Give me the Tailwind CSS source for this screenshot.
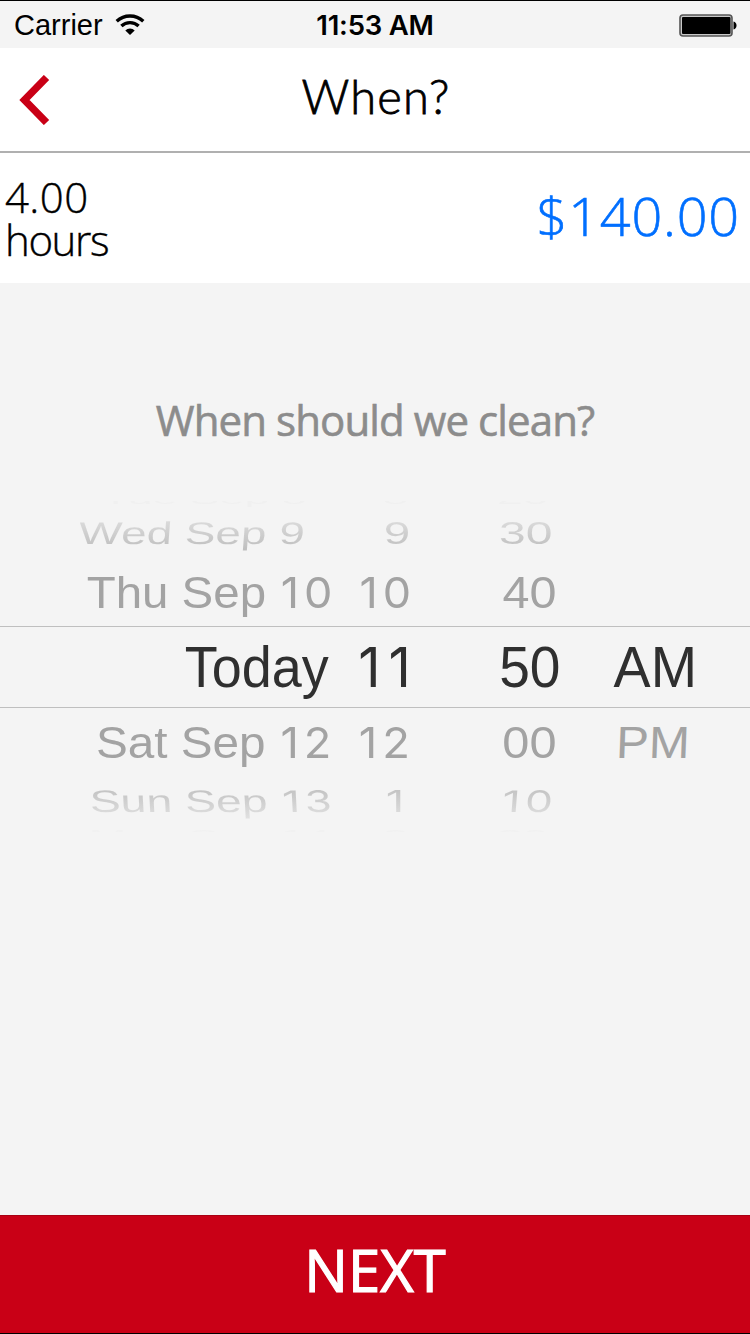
<!DOCTYPE html>
<html lang="en">
<head>
<meta charset="utf-8">
<title>When?</title>
<script src="https://cdn.jsdelivr.net/npm/@tailwindcss/browser@4"></script>
</head>
<body class="bg-[#f4f4f4]">
<div class="flex flex-col w-[750px] h-[1334px] overflow-hidden border-y border-black bg-[#f4f4f4] font-['Liberation_Sans',sans-serif] text-black">

  <!-- Status bar -->
  <div class="grid grid-cols-3 items-center h-[47px] shrink-0 pl-[14px] pr-[13px] pt-[2px]">
    <div class="flex items-center gap-3">
      <span class="text-[29px] leading-none">Carrier</span>
      <svg class="w-[30px] h-[22px] -mt-[2px]" viewBox="0 0 30 22" fill="none" stroke="#000">
        <path d="M1.700 7.200a19.500 19.500 0 0 1 26.600 0" stroke-width="3.4"/>
        <path d="M6.400 12a12.400 12.400 0 0 1 17.200 0" stroke-width="3.3"/>
        <path d="M15 21l-4.700-4.600a6.800 6.800 0 0 1 9.400 0z" fill="#000" stroke="none"/>
      </svg>
    </div>
    <span class="text-center font-['Inter',sans-serif] font-semibold text-[27.5px] leading-none -ml-px tracking-[-0.2px]">11:53 AM</span>
    <svg class="w-[58px] h-[23px] justify-self-end" viewBox="0 0 58 23">
      <rect x="1" y="1" width="52" height="21" rx="3" fill="#c8c8c8" stroke="#555" stroke-width="1.6"/>
      <rect x="3" y="3" width="48.500" height="17" rx="1" fill="#000"/>
      <path d="M54.500 7.500c4 .5 4 7.500 0 8z" fill="#000"/>
    </svg>
  </div>

  <!-- Navigation bar -->
  <div class="grid grid-cols-[1fr_auto_1fr] items-center h-[105px] shrink-0 bg-white border-b-2 border-[#b0b0b0]">
    <svg class="w-[31px] h-[50px] ml-[19px]" viewBox="0 0 31 50" fill="none" stroke="#c90016" stroke-width="7.4">
      <path d="M27.500 2.500L5.500 25l22 22.500"/>
    </svg>
    <h1 class="pb-[7px] pl-[2px] font-['Lato',sans-serif] font-light text-[47px] leading-none tracking-[1.2px] [-webkit-text-stroke:0.8px_black]">When?</h1>
    <span></span>
  </div>

  <!-- Summary -->
  <div class="flex items-center justify-between h-[130px] shrink-0 bg-white pl-[5px] pr-[10px] font-['Open_Sans',sans-serif] font-light">
    <div class="flex flex-col pb-px text-[42px] leading-[43px] [-webkit-text-stroke:0.4px_black]">
      <span class="tracking-[0.4px]">4.00</span>
      <span class="tracking-[-1.4px]">hours</span>
    </div>
    <span class="pb-[6px] text-[54px] leading-none tracking-[0.8px] text-[#006fff] [-webkit-text-stroke:0.6px_#006fff]">$140.00</span>
  </div>

  <h2 class="mt-[116px] text-center font-['Open_Sans',sans-serif] font-medium text-[42px] leading-[42px] tracking-[-0.9px] text-[#8c8c8c] [-webkit-text-stroke:0.6px_#8c8c8c]">When should we clean?</h2>

  <!-- Date and time wheel -->
  <div class="mt-[60px] text-[58px] leading-[70px] whitespace-nowrap">
    <div class="grid grid-cols-[332px_79px_149px] justify-items-end h-[7px] overflow-hidden text-[#f0f0f0]">
      <span class="-mt-[38px] mr-[26px] origin-right scale-x-[0.77] scale-y-[0.3]">Tue Sep 8</span>
      <span class="-mt-[38px] mr-[3px] origin-right scale-x-[0.8] scale-y-[0.3]">8</span>
      <span class="-mt-[38px] mr-[11px] origin-right scale-x-[0.8] scale-y-[0.3]">20</span>
    </div>
    <div class="grid grid-cols-[332px_79px_149px] content-center justify-items-end h-[50px]">
      <span class="mr-[27px] origin-right scale-x-[0.791] scale-y-[0.54] -skew-x-3 bg-linear-to-b from-[#e2e2e2] to-[#bcbcbc] bg-clip-text text-transparent">Wed Sep 9</span>
      <span class="mr-[1px] origin-right scale-x-[0.82] scale-y-[0.54] bg-linear-to-b from-[#e2e2e2] to-[#bcbcbc] bg-clip-text text-transparent">9</span>
      <span class="mr-[7px] origin-right scale-x-[0.829] scale-y-[0.54] bg-linear-to-b from-[#e2e2e2] to-[#bcbcbc] bg-clip-text text-transparent">30</span>
    </div>
    <div class="grid grid-cols-[332px_79px_149px] content-center justify-items-end h-[68px] text-[#a3a3a3]">
      <span class="origin-right scale-x-[0.818] scale-y-[0.777]">Thu Sep <span class="ml-[2px] -mr-[6px] font-['Inter'] text-[55px] tracking-[6px]">10</span></span>
      <span class="-mr-[6px] origin-[calc(100%-6px)_50%] scale-x-[0.816] scale-y-[0.777] font-['Inter'] text-[55px] tracking-[6px]">10</span>
      <span class="mr-[3px] origin-right scale-x-[0.837] scale-y-[0.777]">40</span>
    </div>
    <div class="grid grid-cols-[332px_79px_149px_138px] content-center justify-items-end h-[82px] border-y border-[#bfbfbf] text-[#2f2f2f]">
      <span class="mr-[3px] origin-right scale-x-[0.93]">Today</span>
      <span class="-mr-[8px] font-['Inter'] text-[55px] tracking-[8px]">11</span>
      <span class="-mr-px origin-right scale-x-[0.95]">50</span>
      <span class="mr-[1px] origin-right scale-x-[0.959]">AM</span>
    </div>
    <div class="grid grid-cols-[332px_79px_149px_138px] content-center justify-items-end h-[68px] text-[#a3a3a3]">
      <span class="mr-[1px] origin-right scale-x-[0.822] scale-y-[0.777]">Sat Sep <span class="ml-[2px] -mr-[6px] font-['Inter'] text-[55px] tracking-[6px]">12</span></span>
      <span class="-mr-[5px] origin-[calc(100%-6px)_50%] scale-x-[0.826] scale-y-[0.777] font-['Inter'] text-[55px] tracking-[6px]">12</span>
      <span class="mr-[3px] origin-right scale-x-[0.84] scale-y-[0.777]">00</span>
      <span class="mr-[8px] origin-right scale-x-[0.85] scale-y-[0.777] -skew-x-2">PM</span>
    </div>
    <div class="grid grid-cols-[332px_79px_149px] content-center justify-items-end h-[50px]">
      <span class="origin-right scale-x-[0.8] scale-y-[0.54] skew-x-2 bg-linear-to-b from-[#bcbcbc] to-[#e2e2e2] bg-clip-text text-transparent">Sun Sep <span class="ml-[2px] -mr-[6px] font-['Inter'] text-[55px] tracking-[6px]">13</span></span>
      <span class="mr-[7px] origin-right scale-x-[0.83] scale-y-[0.54] bg-linear-to-b from-[#bcbcbc] to-[#e2e2e2] bg-clip-text text-transparent font-['Inter'] text-[55px]">1</span>
      <span class="mr-[1px] origin-[calc(100%-6px)_50%] scale-x-[0.806] scale-y-[0.54] -skew-x-3 bg-linear-to-b from-[#bcbcbc] to-[#e2e2e2] bg-clip-text text-transparent font-['Inter'] text-[55px] tracking-[6px]">10</span>
    </div>
    <div class="grid grid-cols-[332px_79px_149px] justify-items-end h-[6px] overflow-hidden text-[#f1f1f1]">
      <span class="-mt-[25px] mr-[2px] origin-right scale-x-[0.77] scale-y-[0.3]">Mon Sep 14</span>
      <span class="-mt-[25px] mr-[3px] origin-right scale-x-[0.8] scale-y-[0.3]">2</span>
      <span class="-mt-[25px] mr-[11px] origin-right scale-x-[0.8] scale-y-[0.3]">20</span>
    </div>
  </div>

  <button class="mt-auto flex items-center justify-center h-[118px] shrink-0 pb-[9px] bg-[#c90016] border-t border-[#a80012] font-['Open_Sans',sans-serif] font-medium text-[58px] leading-none text-white [-webkit-text-stroke:1.2px_white]">NEXT</button>
</div>
</body>
</html>
